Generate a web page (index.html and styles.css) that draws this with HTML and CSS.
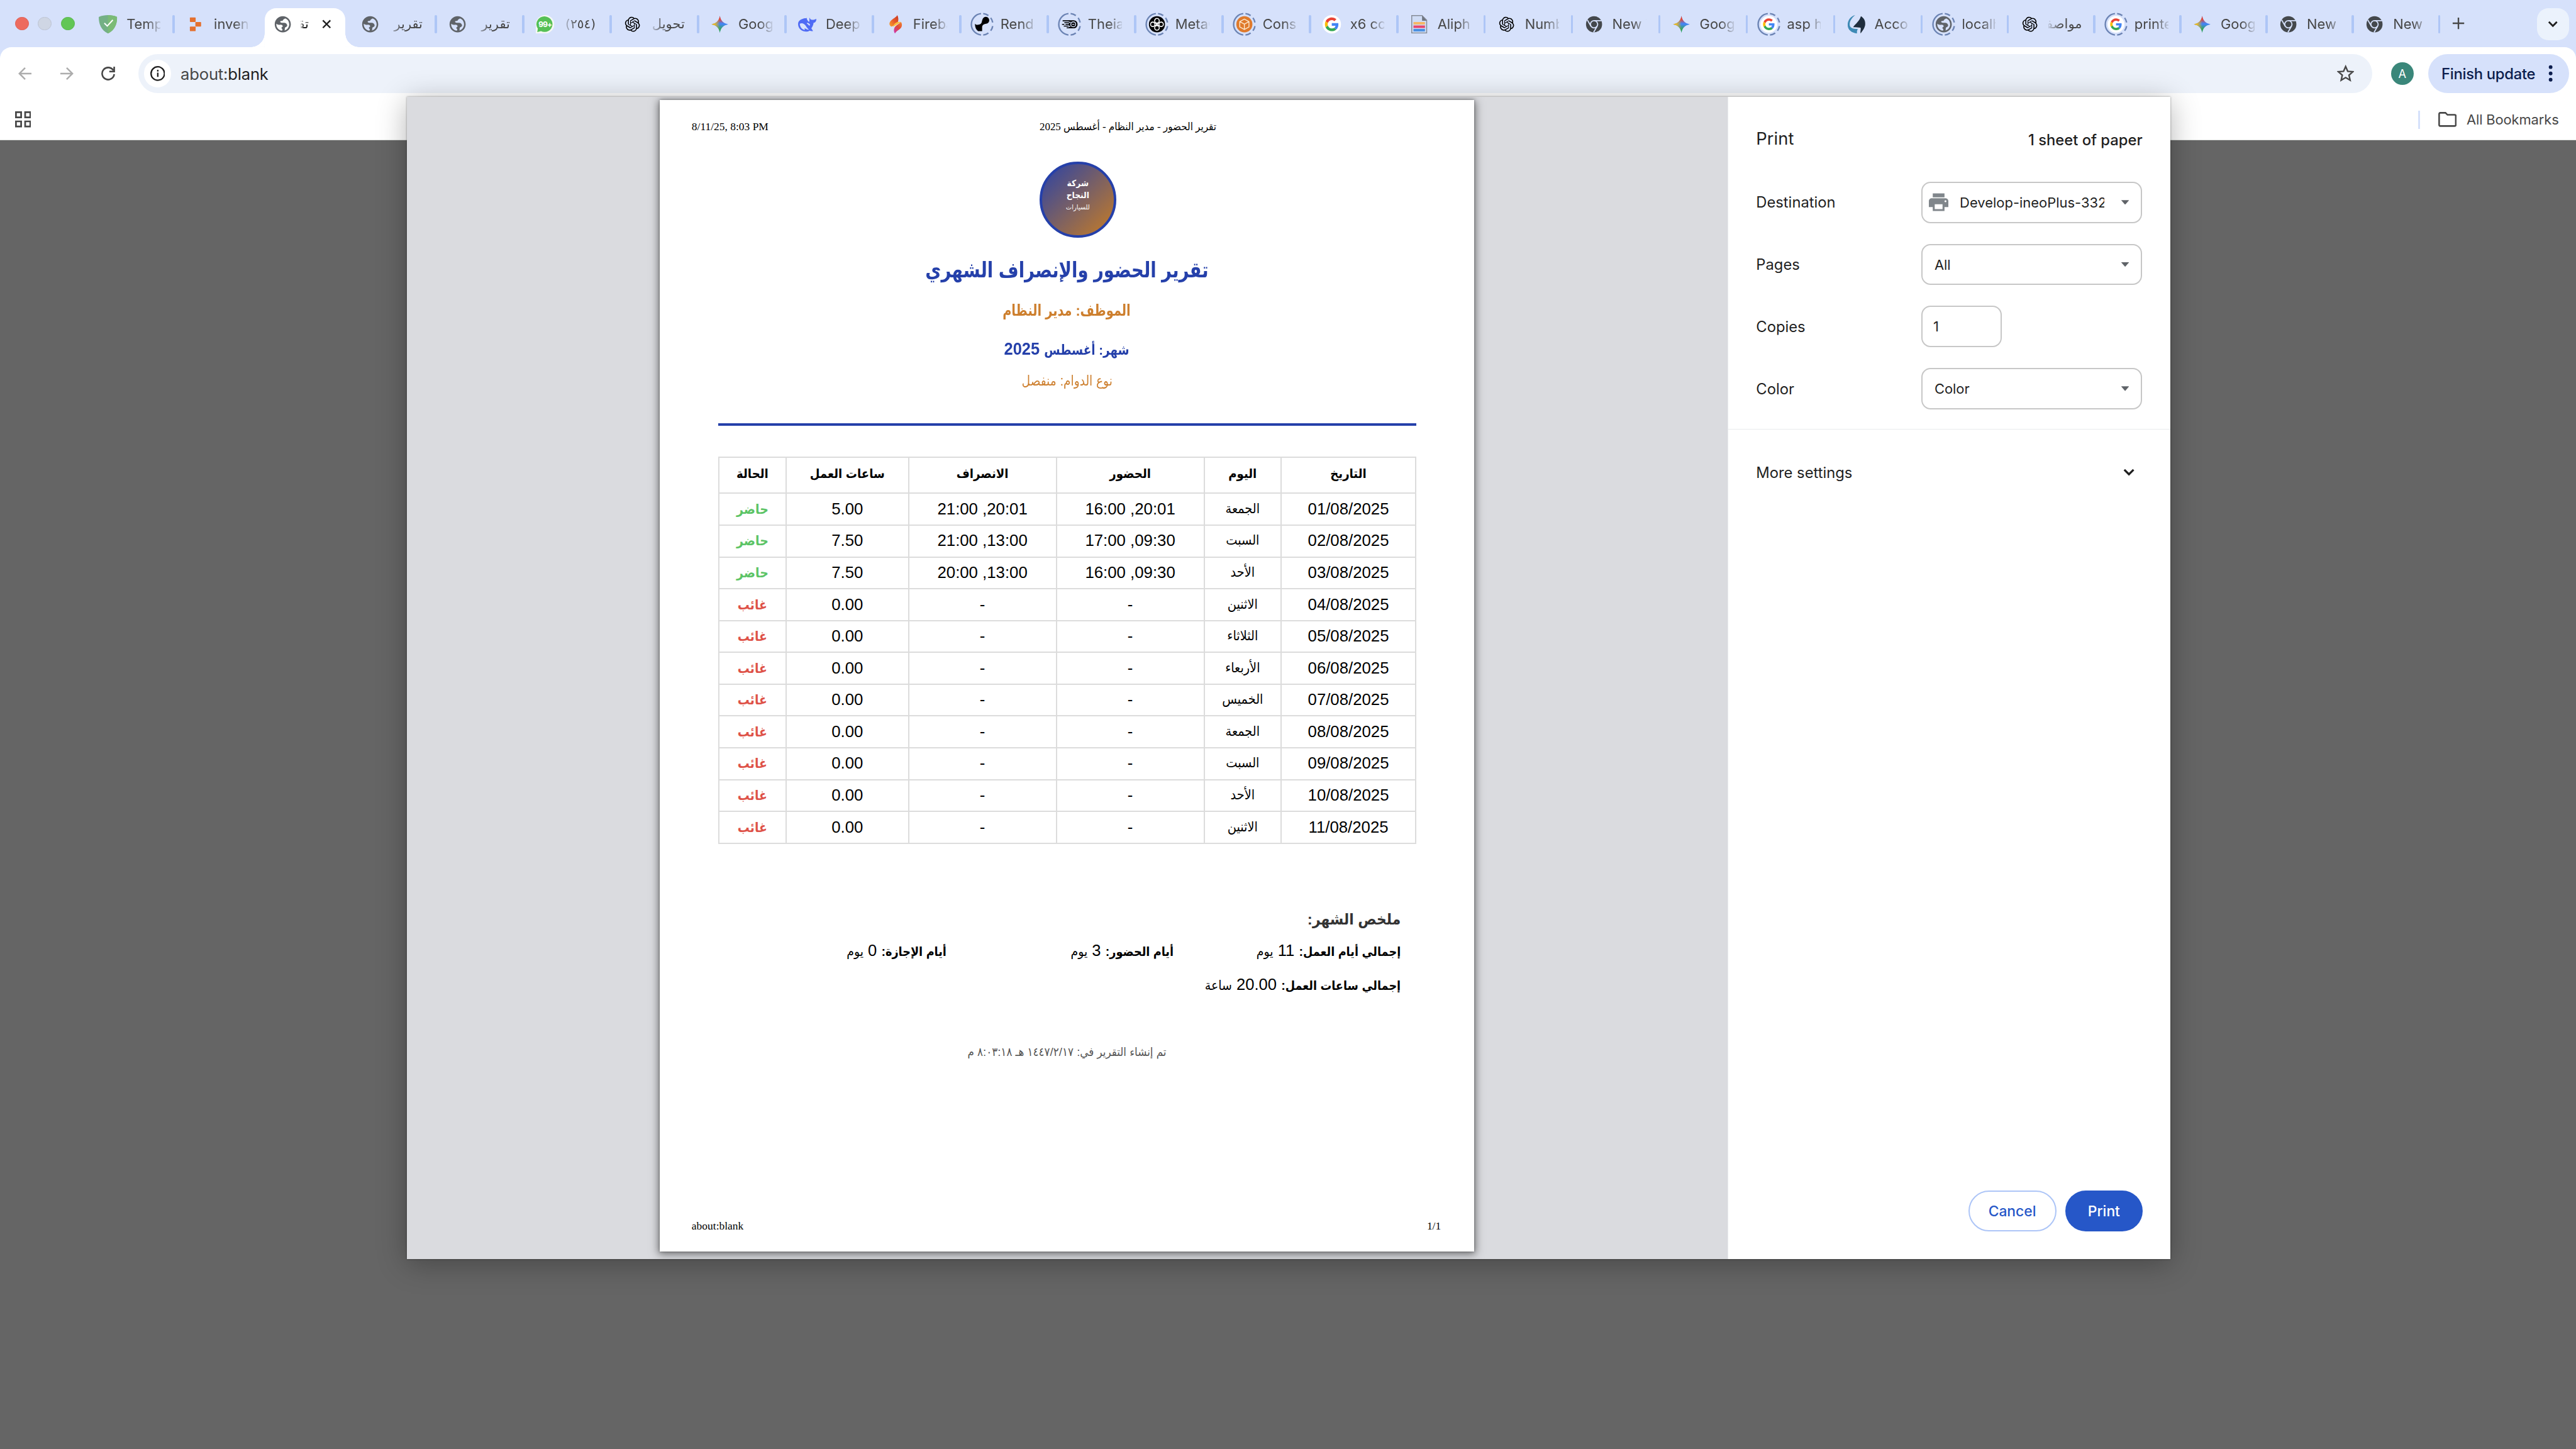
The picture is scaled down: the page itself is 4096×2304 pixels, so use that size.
FILE: index.html
```html
<!DOCTYPE html>
<html lang="en">
<head>
<meta charset="utf-8">
<title>about:blank</title>
<link rel="stylesheet" href="styles.css">
</head>
<body>
<svg class="defs" aria-hidden="true">
  <defs>
    <linearGradient id="gem-r" x1="0" y1="0" x2="0" y2="1"><stop offset="0" stop-color="#ea4335"/><stop offset=".2" stop-color="#ea4335"/><stop offset=".45" stop-color="#ea4335" stop-opacity="0"/></linearGradient>
    <linearGradient id="gem-g" x1="0" y1="1" x2="0" y2="0"><stop offset="0" stop-color="#34a853"/><stop offset=".2" stop-color="#34a853"/><stop offset=".5" stop-color="#34a853" stop-opacity="0"/></linearGradient>
    <linearGradient id="gem-y" x1="0" y1="0" x2="1" y2="0"><stop offset="0" stop-color="#fbbc04"/><stop offset=".18" stop-color="#f0bb20"/><stop offset=".5" stop-color="#fbbc04" stop-opacity="0"/></linearGradient>
    <linearGradient id="fb1" x1="1" y1="0" x2="0" y2="1"><stop offset="0" stop-color="#c8371f"/><stop offset=".5" stop-color="#e65a2a"/><stop offset="1" stop-color="#fba52c"/></linearGradient>
    <linearGradient id="fb2" x1="1" y1="0" x2=".2" y2="1"><stop offset="0" stop-color="#f08a35"/><stop offset=".5" stop-color="#e04a35"/><stop offset="1" stop-color="#cf38a8"/></linearGradient>
  </defs>
  <symbol id="ring" viewBox="0 0 32 32" overflow="visible"><circle cx="16" cy="16" r="18.7" pathLength="100" fill="none" stroke="#6c84b4" stroke-width="2.6" stroke-dasharray="0 2.8 7.5 4.7 8.3 3.4 46.6 3.4 8.3 4.7 7.5 2.8"/></symbol>
  <symbol id="globe" viewBox="0 0 32 32"><path transform="translate(-.8 -.8) scale(1.4)" fill="#5f6368" d="M12 2C6.48 2 2 6.48 2 12s4.48 10 10 10 10-4.48 10-10S17.52 2 12 2zm-1 17.93c-3.95-.49-7-3.85-7-7.93 0-.2 0-.4.03-.6C5.500 12.700 7 12.900 8.500 12.600c1.800-.2 3.300.4 3.500 1.900 0 1-1.600.8-1.600 2.100 0 1.100 1.200.9 1.200 1.900 0 .6-.3 1-.6 1.430zm3-.2c1.200-1 0-2.500.8-3.500.9-1.200 2.700-1 2.700-2.800 0-2.200-2.200-3.400-4.600-3.300-1.700 0-2.700.3-3.700-.5-.9-.8-.2-1.800 1-1.800 1.800.1 1.800-.6 2.500-1.600.6-.8 1.900-.5 1.900-1.500C17.930 5.380 20 8.650 20 12c0 3.600-2.500 6.700-6 7.730z"/></symbol>
  <symbol id="shield" viewBox="0 0 32 32"><path fill="#74b085" d="M16 0c5 0 11 .8 16 3.200 0 12-4 22.800-16 28.800C4 26 0 15.200 0 3.200 5 .8 11 0 16 0z"/><path fill="#7bbb76" d="M16 0c5 0 11 .8 16 3.200 0 12-4 22.800-16 28.800z"/><path fill="none" stroke="#fff" stroke-width="2.200" d="M9.800 14l5 5L24.500 8.500"/></symbol>
  <symbol id="inven" viewBox="0 0 32 32"><g fill="#e4702f"><rect x="6.500" y="4" width="10" height="8" rx="1"/><rect x="16" y="12" width="10" height="8" rx="1"/><rect x="6.500" y="20" width="10" height="8" rx="1"/></g></symbol>
  <symbol id="whats" viewBox="0 0 32 32"><path fill="#f4f8f4" d="M0 32V16A16 16 0 1 1 16 32z"/><path fill="#55c055" d="M2.500 29.500l1-6A14 13.500 0 1 1 9 28z"/></symbol>
  <symbol id="openai" viewBox="0 0 32 32"><path transform="translate(3 3) scale(1.083)" fill="#000" d="M22.2819 9.8211a5.9847 5.9847 0 0 0-.5157-4.9108 6.0462 6.0462 0 0 0-6.5098-2.9A6.0651 6.0651 0 0 0 4.9807 4.1818a5.9847 5.9847 0 0 0-3.9977 2.9 6.0462 6.0462 0 0 0 .7427 7.0966 5.98 5.98 0 0 0 .511 4.9107 6.051 6.051 0 0 0 6.5146 2.9001A5.9847 5.9847 0 0 0 13.2599 24a6.0557 6.0557 0 0 0 5.7718-4.2058 5.9894 5.9894 0 0 0 3.9977-2.9001 6.0557 6.0557 0 0 0-.7475-7.0729zm-9.022 12.6081a4.4755 4.4755 0 0 1-2.8764-1.0408l.1419-.0804 4.7783-2.7582a.7948.7948 0 0 0 .3927-.6813v-6.7369l2.02 1.1686a.071.071 0 0 1 .038.052v5.5826a4.504 4.504 0 0 1-4.4945 4.4944zm-9.6607-4.1254a4.4708 4.4708 0 0 1-.5346-3.0137l.142.0852 4.783 2.7582a.7712.7712 0 0 0 .7806 0l5.8428-3.3685v2.3324a.0804.0804 0 0 1-.0332.0615L9.74 19.9502a4.4992 4.4992 0 0 1-6.1408-1.6464zM2.3408 7.8956a4.485 4.485 0 0 1 2.3655-1.9728V11.6a.7664.7664 0 0 0 .3879.6765l5.8144 3.3543-2.0201 1.1685a.0757.0757 0 0 1-.071 0l-4.8303-2.7865A4.504 4.504 0 0 1 2.3408 7.872zm16.5963 3.8558L13.1038 8.364 15.1192 7.2a.0757.0757 0 0 1 .071 0l4.8303 2.7913a4.4944 4.4944 0 0 1-.6765 8.1042v-5.6772a.79.79 0 0 0-.407-.667zm2.0107-3.0231l-.142-.0852-4.7735-2.7818a.7759.7759 0 0 0-.7854 0L9.409 9.2297V6.8974a.0662.0662 0 0 1 .0284-.0615l4.8303-2.7866a4.4992 4.4992 0 0 1 6.6802 4.66zM8.3065 12.863l-2.02-1.1638a.0804.0804 0 0 1-.038-.0567V6.0742a4.4992 4.4992 0 0 1 7.3757-3.4537l-.142.0805L8.704 5.459a.7948.7948 0 0 0-.3927.6813zm1.0976-2.3654l2.602-1.4998 2.6069 1.4998v2.9994l-2.5974 1.4997-2.6067-1.4997Z"/></symbol>
  <symbol id="gemini" viewBox="0 0 32 32"><path fill="#4285f4" d="M16 1.500C17.500 10 22 14.500 30.500 16 22 17.500 17.500 22 16 30.500 14.500 22 10 17.500 1.500 16 10 14.500 14.500 10 16 1.500z"/><path fill="url(#gem-g)" d="M16 1.500C17.500 10 22 14.500 30.500 16 22 17.500 17.500 22 16 30.500 14.500 22 10 17.500 1.500 16 10 14.500 14.500 10 16 1.500z"/><path fill="url(#gem-r)" d="M16 1.500C17.500 10 22 14.500 30.500 16 22 17.500 17.500 22 16 30.500 14.500 22 10 17.500 1.500 16 10 14.500 14.500 10 16 1.500z"/><path fill="url(#gem-y)" d="M16 1.500C17.500 10 22 14.500 30.500 16 22 17.500 17.500 22 16 30.500 14.500 22 10 17.500 1.500 16 10 14.500 14.500 10 16 1.500z"/></symbol>
  <symbol id="whale" viewBox="0 0 32 32"><path fill="#4f6bf5" d="M8 6.500c3-1.600 5-.5 7-1.500.3 3 1.500 5 4 7 1.500-2 0-5 1-7.500 1 2.800 2.500 4 5 3.800C28 8.300 30 7 31.800 6.500 32 10 30.500 13 27 13.500c-.5 4-2 7-4 9.500l3 4.500c-2 .8-4 .2-6-.5-3 2-7 2.200-11 .8C4 26 0 21.500 0 15.500 0 11 3 8 8 6.500z"/><path fill="#d6e1fb" d="M3 15c4-2 8 0 10.500 4 1.500 2.500 3.500 5 5.500 6.500-4 0-5.500-2-7.500-2.500-.5 1 0 2 .5 3C6.500 25 3 20 3 15zM15.500 13.500c2 0 4 1.200 5.500 3.500l-1.500 1.500c-1.500-1.800-2.500-3-4-3.500z"/></symbol>
  <symbol id="fire" viewBox="0 0 32 32"><path fill="url(#fb1)" d="M20.500 0c-1 3-8 6.500-11.500 10-3.500 4-2.500 9 2 10 3-1.500 8-4 10.500-8 1.500-3.500 1-8-1-12z"/><path fill="#fbbf3c" d="M16.500 14.500c3-3 7.500-3 10.500-2.500L13 20.500c.5-2 1.500-4 3.500-6z"/><path fill="url(#fb2)" d="M27 12c2.800 4.500 1.800 9-2 12-3 2.500-7 4.500-8.500 8-2.500-3-2.500-8.500.5-12 3-3.500 7-5 10-8z"/></symbol>
  <symbol id="rend" viewBox="0 0 32 32" overflow="visible"><use href="#ring"/><path fill="#000" d="M3.500 15c2 2.500 5 2 7.500 1.500C16 15 15 12 16.500 8a6 6 0 1 1 6.500 7c-3.500.5-7 2-7 6v7H9c-3.500-2.500-5.500-7-5.500-13z"/></symbol>
  <symbol id="theia" viewBox="0 0 32 32" overflow="visible"><use href="#ring"/><path fill="#000" d="M15 9h8a7 7 0 0 1 0 14h-8z"/><path fill="none" stroke="#000" stroke-width="1.700" d="M4 10h12M7 13.200h9M3 16.200h4M9 16.200h7M6 19.200h10M11 22.200h5"/><circle cx="22.500" cy="16" r="4.300" fill="none" stroke="#d6e1fb" stroke-width="1.600"/><path stroke="#d6e1fb" stroke-width="1.600" d="M20.500 16h4M15 12.500h3M14 19.500h3.500"/></symbol>
  <symbol id="metai" viewBox="0 0 32 32" overflow="visible"><use href="#ring"/><circle cx="16" cy="16" r="14" fill="#000"/><g fill="none" stroke="#fff" stroke-width="1.700"><circle cx="16" cy="9.800" r="4"/><circle cx="16" cy="22.200" r="4"/><circle cx="8.700" cy="16" r="3.800"/><circle cx="23.300" cy="16" r="3.800"/><path d="M12 12.500l8 7M12 19.500l8-7"/></g></symbol>
  <symbol id="cube" viewBox="0 0 32 32" overflow="visible"><use href="#ring"/><circle cx="16" cy="16" r="14" fill="#df7a2c"/><path fill="none" stroke="#fde9cf" stroke-width="1.500" stroke-linejoin="round" d="M16 7l8 4.400v9.200L16 25l-8-4.400v-9.200zM8 11.400l8 4.300 8-4.300M16 15.700V25"/></symbol>
  <symbol id="google" viewBox="0 0 32 32" overflow="visible"><circle cx="16" cy="16" r="16" fill="#fff"/><g transform="translate(4 4) scale(.5)"><path fill="#ea4335" d="M24 9.500c3.540 0 6.710 1.220 9.210 3.600l6.850-6.850C35.900 2.380 30.470 0 24 0 14.620 0 6.510 5.380 2.560 13.220l7.980 6.190C12.430 13.720 17.740 9.500 24 9.500z"/><path fill="#4285f4" d="M46.980 24.550c0-1.570-.15-3.090-.38-4.550H24v9.020h12.940c-.58 2.960-2.260 5.480-4.780 7.180l7.730 6c4.510-4.180 7.090-10.360 7.090-17.650z"/><path fill="#fbbc05" d="M10.530 28.590c-.48-1.450-.76-2.990-.76-4.590s.27-3.140.76-4.590l-7.980-6.190C.92 16.460 0 20.120 0 24c0 3.880.92 7.540 2.560 10.780l7.970-6.190z"/><path fill="#34a853" d="M24 48c6.480 0 11.930-2.130 15.890-5.810l-7.730-6c-2.150 1.450-4.920 2.300-8.160 2.300-6.260 0-11.570-4.220-13.470-9.910l-7.980 6.190C6.510 42.620 14.620 48 24 48z"/></g></symbol>
  <symbol id="googlering" viewBox="0 0 32 32" overflow="visible"><use href="#ring"/><circle cx="16" cy="16" r="14.500" fill="#fff"/><g transform="translate(2.400 2.400) scale(.85)"><use href="#google" width="32" height="32"/></g></symbol>
  <symbol id="globering" viewBox="0 0 32 32" overflow="visible"><use href="#ring"/><use href="#globe" width="32" height="32"/></symbol>
  <symbol id="sheet" viewBox="0 0 32 32"><path fill="#cfdcf5" stroke="#858b96" stroke-width="1.600" d="M3 .8h18l8 8v22.400H3z"/><path fill="#6f7580" d="M21 .8l8 9h-8z"/><path fill="#f6b765" d="M6 12h20v4.500H6z"/><path fill="#e8456b" d="M6 18h20v4.500H6z"/><path fill="#4a90e2" d="M6 24h20v4.500H6z"/></symbol>
  <symbol id="chrome" viewBox="0 0 32 32"><circle cx="16" cy="16" r="14" fill="#44484c"/><g fill="none" stroke="#d6e1fb" stroke-width="2"><circle cx="16" cy="16" r="6.300"/><path d="M16 9.700h13M10.500 19.200L4.300 8.300M21.500 19.200L15.200 30"/></g></symbol>
  <symbol id="acco" viewBox="0 0 32 32"><path fill="#1f2d3d" d="M24 2c5 3 8 8 7.500 14-.3 5-3 9-8 16-1-3.500 1-6.500 0-10-4-.5-8-1-13-1C15 15 22 10 24 2z"/><path fill="#3e8ab5" d="M14 0C9 4 4.500 10 4.500 16c0 6 5 8 14 8-1 3-2 5-1 8C8 31 1 26 1 17 1 8 7 2 14 0z"/></symbol>
</svg>

<div class="screen">
  <div class="tabstrip">
    <div class="lights"><i class="light red"></i><i class="light grey"></i><i class="light green"></i></div>
    <div class="tabs">
      <div class="tab"><svg><use href="#shield"/></svg><span>Templates</span></div>
      <div class="tab nosep"><svg><use href="#inven"/></svg><span>inventory</span></div>
      <div class="tab active"><svg><use href="#globe"/></svg><span class="ar" dir="rtl">تقرير</span><svg class="close" viewBox="0 0 16 16"><path d="M1.500 1.500l13 13M14.500 1.500l-13 13"/></svg></div>
      <div class="tab"><svg><use href="#globe"/></svg><span class="ar" dir="rtl">تقرير الحضور</span></div>
      <div class="tab"><svg><use href="#globe"/></svg><span class="ar" dir="rtl">تقرير الحضور</span></div>
      <div class="tab"><svg><use href="#whats"/></svg><em class="count">99+</em><span class="ar pad" dir="rtl">(٢٥٤)</span></div>
      <div class="tab"><svg><use href="#openai"/></svg><span class="ar" dir="rtl">تحويل</span></div>
      <div class="tab"><svg><use href="#gemini"/></svg><span>Google</span></div>
      <div class="tab"><svg><use href="#whale"/></svg><span>DeepSeek</span></div>
      <div class="tab"><svg><use href="#fire"/></svg><span>Firebase</span></div>
      <div class="tab"><svg><use href="#rend"/></svg><span>Render</span></div>
      <div class="tab"><svg><use href="#theia"/></svg><span>Theia</span></div>
      <div class="tab"><svg><use href="#metai"/></svg><span>MetaG</span></div>
      <div class="tab"><svg><use href="#cube"/></svg><span>Cons</span></div>
      <div class="tab"><svg><use href="#google"/></svg><span>x6 co</span></div>
      <div class="tab"><svg><use href="#sheet"/></svg><span>Aliph</span></div>
      <div class="tab"><svg><use href="#openai"/></svg><span>Numb</span></div>
      <div class="tab"><svg><use href="#chrome"/></svg><span>New Tab</span></div>
      <div class="tab"><svg><use href="#gemini"/></svg><span>Google</span></div>
      <div class="tab"><svg><use href="#googlering"/></svg><span>asp h</span></div>
      <div class="tab"><svg><use href="#acco"/></svg><span>Acco</span></div>
      <div class="tab narrow"><svg><use href="#globering"/></svg><span>localh</span></div>
      <div class="tab narrow"><svg><use href="#openai"/></svg><span class="ar" dir="rtl">مواصفات</span></div>
      <div class="tab narrow"><svg><use href="#googlering"/></svg><span>printer</span></div>
      <div class="tab narrow"><svg><use href="#gemini"/></svg><span>Google</span></div>
      <div class="tab narrow"><svg><use href="#chrome"/></svg><span>New Tab</span></div>
      <div class="tab narrow"><svg><use href="#chrome"/></svg><span>New Tab</span></div>
    </div>
    <svg class="plus" viewBox="0 0 22 22"><path d="M11 1v20M1 11h20"/></svg>
    <div class="dropdown"><svg viewBox="0 0 18 12"><path d="M2 2l7 7 7-7"/></svg></div>
  </div>

  <div class="chrome">
    <div class="toolbar">
      <div class="nav">
        <svg class="off" viewBox="0 0 24 24"><path d="M23 12H2M12 2L2 12l10 10"/></svg>
        <svg class="off" viewBox="0 0 24 24"><path d="M1 12h21M12 2l10 10-10 10"/></svg>
        <svg viewBox="0 0 24 24"><path d="M21 6.500A10.500 10.500 0 1 0 22.500 13M22.500 0v8.500H14"/></svg>
      </div>
      <div class="omnibox">
        <div class="info"><svg viewBox="0 0 26 26"><circle cx="13" cy="13" r="11.700"/><path d="M13 11.500v7.500M13 6.700v2.800"/></svg></div>
        <span class="url"><span class="scheme">about:</span>blank</span>
        <svg class="bookmark" viewBox="0 0 30 30"><path d="M15 3l3.600 8.300 9 .8-6.800 6 2 8.800L15 22.200l-7.800 4.700 2-8.800-6.800-6 9-.8z"/></svg>
      </div>
      <div class="avatar">A</div>
      <div class="update">Finish update<svg viewBox="0 0 8 30"><circle cx="4" cy="4" r="3.200"/><circle cx="4" cy="15" r="3.200"/><circle cx="4" cy="26" r="3.200"/></svg></div>
    </div>
    <div class="bookmarks">
      <svg class="grid" viewBox="0 0 28 28"><path d="M1.500 1.500h9v9h-9zM17.500 1.500h9v9h-9zM1.500 17.500h9v9h-9zM17.500 17.500h9v9h-9z"/></svg>
      <div class="allmarks"><svg viewBox="0 0 32 26"><path d="M1.500 3.500v19q0 2 2 2h25q2 0 2-2V7q0-2-2-2H16l-3.500-3.500h-9q-2 0-2 2z"/></svg>All Bookmarks</div>
    </div>
  </div>

  <div class="dialog">
    <div class="preview">
      <div class="paper">
        <div class="pagehead"><span>8/11/25, 8:03 PM</span><span class="doctitle"><b dir="rtl">تقرير الحضور - مدير النظام - أغسطس 2025</b></span></div>
        <div class="logo" dir="rtl"><b>شركة</b><b class="l2">النجاح</b><span>للسيارات</span></div>
        <div class="line title" dir="rtl"><span>تقرير الحضور والإنصراف الشهري</span></div>
        <div class="line employee" dir="rtl"><span>الموظف: مدير النظام</span></div>
        <div class="line month" dir="rtl"><span><b>شهر: أغسطس</b> 2025</span></div>
        <div class="line shift" dir="rtl"><span>نوع الدوام: منفصل</span></div>
        <div class="rule"></div>
        <table dir="rtl">
          <colgroup><col class="c1"><col class="c2"><col class="c3"><col class="c3"><col class="c5"><col class="c6"></colgroup>
          <tr><th>التاريخ</th><th>اليوم</th><th>الحضور</th><th>الانصراف</th><th>ساعات العمل</th><th>الحالة</th></tr>
          <tr><td>01/08/2025</td><td class="d">الجمعة</td><td>16:00 ,20:01</td><td>21:00 ,20:01</td><td>5.00</td><td class="in">حاضر</td></tr>
          <tr><td>02/08/2025</td><td class="d">السبت</td><td>17:00 ,09:30</td><td>21:00 ,13:00</td><td>7.50</td><td class="in">حاضر</td></tr>
          <tr><td>03/08/2025</td><td class="d">الأحد</td><td>16:00 ,09:30</td><td>20:00 ,13:00</td><td>7.50</td><td class="in">حاضر</td></tr>
          <tr><td>04/08/2025</td><td class="d">الاثنين</td><td>-</td><td>-</td><td>0.00</td><td class="out">غائب</td></tr>
          <tr><td>05/08/2025</td><td class="d">الثلاثاء</td><td>-</td><td>-</td><td>0.00</td><td class="out">غائب</td></tr>
          <tr><td>06/08/2025</td><td class="d">الأربعاء</td><td>-</td><td>-</td><td>0.00</td><td class="out">غائب</td></tr>
          <tr><td>07/08/2025</td><td class="d">الخميس</td><td>-</td><td>-</td><td>0.00</td><td class="out">غائب</td></tr>
          <tr><td>08/08/2025</td><td class="d">الجمعة</td><td>-</td><td>-</td><td>0.00</td><td class="out">غائب</td></tr>
          <tr><td>09/08/2025</td><td class="d">السبت</td><td>-</td><td>-</td><td>0.00</td><td class="out">غائب</td></tr>
          <tr><td>10/08/2025</td><td class="d">الأحد</td><td>-</td><td>-</td><td>0.00</td><td class="out">غائب</td></tr>
          <tr><td>11/08/2025</td><td class="d">الاثنين</td><td>-</td><td>-</td><td>0.00</td><td class="out">غائب</td></tr>
        </table>
        <div class="summary" dir="rtl">
          <div class="sumhead">ملخص الشهر:</div>
          <div class="sumrow"><span><b>إجمالي أيام العمل:</b> 11 <i>يوم</i></span><span><b>أيام الحضور:</b> 3 <i>يوم</i></span><span><b>أيام الإجازة:</b> 0 <i>يوم</i></span></div>
          <div class="sumrow"><span><b>إجمالي ساعات العمل:</b> 20.00 <i>ساعة</i></span></div>
        </div>
        <div class="line stamp" dir="rtl"><span>تم إنشاء التقرير في: ١٤٤٧/٢/١٧ هـ ٨:٠٣:١٨ م</span></div>
        <div class="pagefoot"><span>about:blank</span><span>1/1</span></div>
      </div>
    </div>
    <div class="sidebar">
      <div class="sidehead"><span class="print">Print</span><span class="sheets">1 sheet of paper</span></div>
      <div class="setting"><label>Destination</label><div class="select dest"><svg class="printer" viewBox="2 3 20 18"><path d="M19 8H5c-1.660 0-3 1.340-3 3v6h4v4h12v-4h4v-6c0-1.660-1.340-3-3-3zm-3 11H8v-5h8v5zm3-7c-.55 0-1-.45-1-1s.45-1 1-1 1 .45 1 1-.45 1-1 1zm-1-9H6v4h12V3z"/></svg><span>Develop-ineoPlus-332</span><i class="caret"></i></div></div>
      <div class="setting"><label>Pages</label><div class="select"><span>All</span><i class="caret"></i></div></div>
      <div class="setting"><label>Copies</label><div class="select short"><span>1</span></div></div>
      <div class="setting"><label>Color</label><div class="select"><span>Color</span><i class="caret"></i></div></div>
      <div class="more"><span>More settings</span><svg viewBox="0 0 20 14"><path d="M2 2l8 8 8-8"/></svg></div>
      <div class="actions"><div class="btn cancel">Cancel</div><div class="btn go">Print</div></div>
    </div>
  </div>
</div>
</body>
</html>
```
FILE: styles.css
```css
* { box-sizing: border-box; }
html, body { margin: 0; padding: 0; overflow: hidden; }
body { background: #656565; font-family: Inter, "DejaVu Sans", sans-serif; }
svg { display: block; flex: none; }
.defs { position: absolute; width: 0; height: 0; }
i, em { font-style: normal; }

.screen {
  zoom: 0.9142857;
  position: relative;
  width: 4480px;
  height: 2520px;
  background: #656565;
  overflow: hidden;
}

/* tab strip */
.tabstrip { display: flex; height: 102px; margin-bottom: -20px; padding-bottom: 20px; background: #d6e1fb; }
.lights { display: flex; gap: 16px; width: 150px; padding: 29px 0 0 26px; flex: none; }
.light { width: 24px; height: 24px; border-radius: 50%; }
.red { background: #ed6b5f; border: 2px solid #de5d51; }
.grey { background: #cfd6e4; border: 2px solid #bcc3d2; }
.green { background: #62c655; border: 2px solid #55b549; }
.tabs { display: flex; flex: none; }
.tab {
  position: relative;
  display: flex;
  align-items: center;
  width: 152px;
  height: 82px;
  padding: 2px 0 0 22px;
  font-size: 24px;
  color: #474747;
  flex: none;
}
.tab.narrow { width: 150px; }
.tab svg { width: 32px; height: 32px; overflow: visible; }
.tab span {
  width: 59px;
  margin-left: 16px;
  overflow: hidden;
  white-space: nowrap;
  line-height: 40px;
  -webkit-mask-image: linear-gradient(to right, #000 60%, rgba(0,0,0,.15));
  mask-image: linear-gradient(to right, #000 60%, rgba(0,0,0,.15));
}
.tab .ar {
  font-family: "DejaVu Sans", sans-serif;
  font-size: 23px;
  -webkit-mask-image: linear-gradient(to left, #000 60%, rgba(0,0,0,.15));
  mask-image: linear-gradient(to left, #000 60%, rgba(0,0,0,.15));
}
.tab .pad { padding-right: 3px; font-size: 22px; }
.count { position: absolute; left: 22px; top: 27px; width: 32px; height: 30px; font-size: 13px; font-weight: 700; letter-spacing: -1px; line-height: 30px; text-align: center; color: #fff; }
.tab::after {
  content: "";
  position: absolute;
  right: -2px;
  top: 26px;
  width: 4px;
  height: 32px;
  border-radius: 2px;
  background: #aec6f6;
}
.tab.nosep::after { display: none; }
.tab.active { color: #1f1f1f; isolation: isolate; }
.tab.active::before {
  content: "";
  position: absolute;
  z-index: -1;
  left: 6px;
  top: 14px;
  width: 140px;
  height: 68px;
  border-radius: 20px 20px 0 0;
  background: #fff;
}
.tab.active::after {
  z-index: -1;
  left: -18px;
  right: auto;
  top: 58px;
  width: 188px;
  height: 24px;
  border-radius: 0;
  background:
    radial-gradient(circle at 0 0, transparent 23.500px, #fff 24px) 0 0 / 24px 24px no-repeat,
    radial-gradient(circle at 100% 0, transparent 23.500px, #fff 24px) 100% 0 / 24px 24px no-repeat;
}
.tab.active span { width: 14px; margin-left: 15px; }
.tab.active .close { width: 16px; height: 16px; margin-left: 23px; stroke: #1f1f1f; stroke-width: 2.600; fill: none; }
.plus { width: 22px; height: 22px; margin: 29px 0 0 23px; stroke: #474747; stroke-width: 2.600; fill: none; }
.dropdown { display: flex; align-items: center; justify-content: center; width: 56px; height: 56px; margin: 14px 12px 0 auto; border-radius: 20px; background: #ebf2fc; }
.dropdown svg { width: 18px; height: 12px; stroke: #1f1f1f; stroke-width: 3; fill: none; }

/* toolbar */
.chrome { position: relative; height: 162px; background: #fff; border-radius: 20px 20px 0 0; border-bottom: 2px solid #dfe2df; }
.toolbar { display: flex; align-items: center; height: 92px; padding: 0 12px 0 32px; }
.nav { display: flex; gap: 48px; width: 209px; flex: none; }
.nav svg { width: 24px; height: 24px; fill: none; stroke: #474747; stroke-width: 2.800; }
.nav .off { stroke: #adadad; }
.omnibox { display: flex; align-items: center; width: 3885px; height: 68px; padding: 0 32px 0 9px; border-radius: 34px; background: #edf2fa; flex: none; }
.info { display: flex; align-items: center; justify-content: center; width: 48px; height: 48px; border-radius: 50%; background: #fff; }
.info svg { width: 26px; height: 26px; fill: none; stroke: #1f1f1f; stroke-width: 2.500; }
.url { margin-left: 16px; font-size: 28px; color: #1f1f1f; letter-spacing: -.2px; }
.scheme { color: #474747; }
.bookmark { width: 30px; height: 30px; margin-left: auto; fill: none; stroke: #474747; stroke-width: 2.600; }
.avatar { width: 40px; height: 40px; margin-left: 32px; border-radius: 50%; background: #3a877a; color: #fff; font-size: 20px; line-height: 40px; text-align: center; flex: none; }
.update { display: flex; align-items: center; justify-content: space-between; width: 245px; height: 68px; margin-left: auto; padding: 0 28px 0 23px; border-radius: 34px; background: #d6e1fb; color: #0c1d4d; font-size: 26px; font-weight: 500; letter-spacing: -.3px; }
.update svg { width: 8px; height: 30px; fill: #0c1d4d; }
.bookmarks { display: flex; align-items: center; justify-content: space-between; height: 68px; padding: 0 30px 0 26px; }
.grid { width: 28px; height: 28px; fill: none; stroke: #474747; stroke-width: 3; }
.allmarks { display: flex; align-items: center; height: 32px; padding-left: 32px; border-left: 4px solid #d6e1fb; font-size: 24px; letter-spacing: -.15px; color: #474747; }
.allmarks svg { width: 32px; height: 26px; margin-right: 17px; fill: none; stroke: #474747; stroke-width: 2.800; }

/* print dialog floats over the window */
.dialog {
  position: absolute;
  left: 708px;
  top: 168px;
  display: flex;
  width: 3066px;
  height: 2022px;
  background: #fff;
  box-shadow: 0 0 3px rgba(0,0,0,.4), 0 8px 48px rgba(0,0,0,.3);
}
.preview { width: 2296px; padding: 6px 0 0 439px; background: #dadbdf; flex: none; overflow: hidden; }
.paper {
  display: flex;
  flex-direction: column;
  width: 1417px;
  height: 2003px;
  background: #fff;
  box-shadow: 0 3px 14px 2px rgba(0,0,0,.5), 0 0 4px rgba(0,0,0,.35);
  font-family: "Liberation Sans", "DejaVu Sans Condensed", "DejaVu Sans", sans-serif;
  color: #000;
}
.pagehead, .pagefoot { font-family: "Liberation Serif", "DejaVu Sans Condensed", "DejaVu Sans", serif; font-size: 19.100px; }
.pagehead { display: grid; grid-template-columns: 605px auto; align-items: center; height: 94px; padding-left: 56px; line-height: 30px; flex: none; }
.doctitle b { font-weight: 400; font-size: 18.500px; }
.pagefoot { display: flex; justify-content: space-between; align-items: center; height: 90px; margin-top: auto; padding: 0 58px 0 56px; }
.logo {
  display: flex;
  flex-direction: column;
  align-items: center;
  width: 133px;
  height: 133px;
  margin: 13px 0 0 661px;
  padding-top: 23px;
  border-radius: 50%;
  border: 5px solid #2540aa;
  background: linear-gradient(135deg, #2540aa, #cd7f20) border-box;
  color: #fff;
  font-size: 15px;
  line-height: 21px;
  flex: none;
}
.logo span { font-size: 12px; }
.line { display: flex; justify-content: center; height: 50px; line-height: 50px; white-space: nowrap; flex: none; }
.line span { display: block; }
.title { margin-top: 26px; height: 60px; line-height: 60px; font-size: 37px; font-weight: 700; color: #2540aa; }
.title span { transform: scaleX(.903); }
.employee { margin-top: 15px; font-size: 27px; font-weight: 700; color: #cd7f2e; }
.employee span { transform: scaleX(.87); }
.month { margin-top: 17px; font-size: 30px; font-weight: 700; color: #2540aa; }
.month b { font-size: 24px; }
.month span { transform: scaleX(.93); }
.shift { margin-top: 6px; font-size: 24px; color: #cd7f2e; }
.shift span { transform: scaleX(.94); }
.rule { width: 1214px; height: 4.400px; margin: 48.600px 0 0 102px; background: #2540aa; flex: none; }
table { width: 1214px; margin: 53px 0 0 102px; border-collapse: collapse; table-layout: fixed; font-size: 28.200px; flex: none; }
.c1 { width: 234px; }
.c2 { width: 134px; }
.c3 { width: 257px; }
.c5 { width: 213px; }
.c6 { width: 117px; }
th, td { border: 2.200px solid #dcdcdc; padding: 0; height: 55.330px; line-height: 50px; text-align: center; overflow: hidden; white-space: nowrap; }
td { direction: ltr; }
th { height: 63px; padding-bottom: 4px; font-size: 22px; line-height: 52px; }
.d { font-size: 23.500px; }
.in, .out { font-size: 23px; font-weight: 700; }
.in { color: #5cc466; }
.out { color: #de5248; }
.summary { margin-top: 106px; padding: 0 128px 0 0; flex: none; }
.sumhead { height: 50px; line-height: 50px; font-size: 26.500px; font-weight: 700; color: #333; }
.sumrow { display: grid; grid-template-columns: 395px 395px 395px; height: 50px; margin-top: 5px; line-height: 50px; font-size: 28px; white-space: nowrap; }
.sumrow + .sumrow { margin-top: 9px; }
.sumrow b { font-size: 21.500px; }
.sumrow i { font-size: 23px; }
.stamp { margin-top: 73px; height: 40px; line-height: 40px; font-size: 20.400px; color: #555; }

/* settings column */
.sidebar { display: flex; flex-direction: column; flex: 1; border-left: 2px solid #e8eaed; background: #fff; color: #1f1f1f; font-size: 26px; }
.sidehead { display: flex; justify-content: space-between; align-items: center; height: 148px; padding: 0 48px 2px 49px; }
.print { font-size: 30px; }
.sheets { font-size: 26px; font-weight: 500; padding-top: 4px; }
.setting { display: flex; align-items: center; height: 72px; margin-bottom: 36px; padding-left: 49px; }
.setting label { width: 287px; }
.select { display: flex; align-items: center; justify-content: space-between; width: 384px; height: 72px; padding: 0 20px 0 21px; border: 3px solid #c7c7c7; border-radius: 16px; font-size: 24px; }
.select.short { width: 140px; padding-left: 19px; }
.select.dest { justify-content: flex-start; padding-left: 11px; }
.printer { width: 34px; height: 34px; margin-right: 20px; fill: #80868b; }
.dest span { width: 252px; overflow: hidden; white-space: nowrap; }
.dest .caret { margin-left: auto; }
.caret { width: 14px; height: 8px; background: #5f6368; clip-path: polygon(0 0, 100% 0, 50% 100%); }
.more { display: flex; justify-content: space-between; align-items: center; height: 150px; margin-top: -2px; padding: 0 62px 0 49px; border-top: 2px solid #e8eaed; }
.more svg { width: 20px; height: 14px; fill: none; stroke: #1f1f1f; stroke-width: 3.600; }
.actions { display: flex; justify-content: flex-end; gap: 16px; margin: auto 48px 48px 0; }
.btn { height: 72px; border-radius: 36px; line-height: 74px; text-align: center; font-size: 25px; font-weight: 500; }
.cancel { width: 153px; border: 3px solid #adc5f7; line-height: 68px; color: #2657c8; }
.go { width: 134px; background: #2657c8; color: #fff; }
```
